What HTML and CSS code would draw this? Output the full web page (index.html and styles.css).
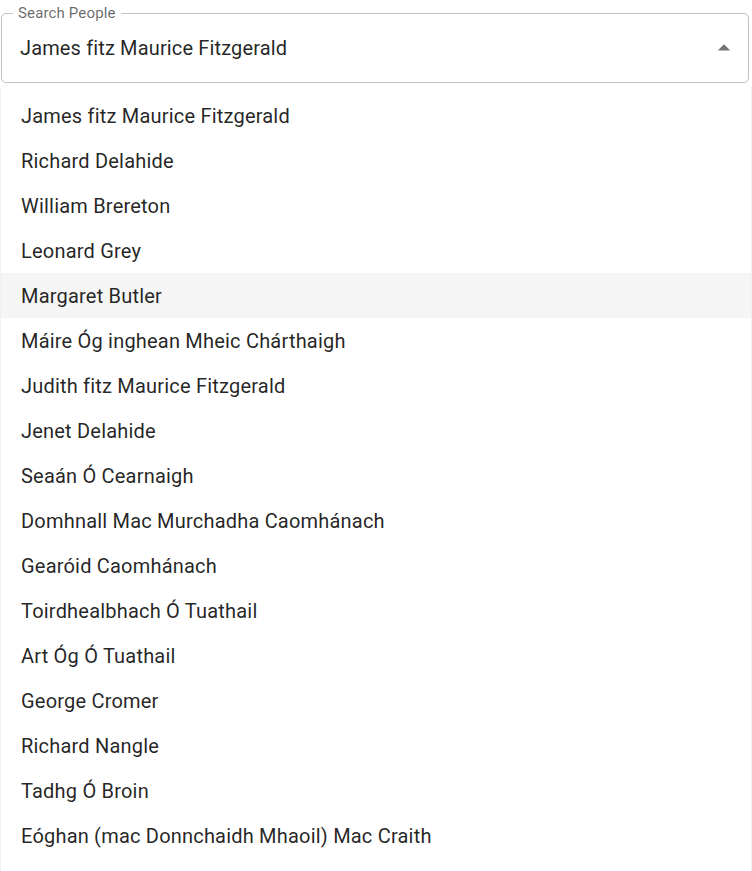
FILE: index.html
```html
<!DOCTYPE html>
<html lang="en">
<head>
<meta charset="utf-8">
<title>Search People</title>
<link rel="stylesheet" href="styles.css">
</head>
<body>
<div class="autocomplete">
  <div class="field">
    <label class="field-label">Search People</label>
    <input class="field-input" type="text" value="James fitz Maurice Fitzgerald" readonly>
    <span class="field-toggle">
      <svg viewBox="0 0 24 24" width="30" height="30" aria-hidden="true"><path d="M7 14l5-5 5 5z" fill="currentColor"/></svg>
    </span>
  </div>
  <div class="paper">
    <ul class="listbox">
      <li class="option">James fitz Maurice Fitzgerald</li>
      <li class="option">Richard Delahide</li>
      <li class="option">William Brereton</li>
      <li class="option">Leonard Grey</li>
      <li class="option option-focused">Margaret Butler</li>
      <li class="option">Máire Óg inghean Mheic Chárthaigh</li>
      <li class="option">Judith fitz Maurice Fitzgerald</li>
      <li class="option">Jenet Delahide</li>
      <li class="option">Seaán Ó Cearnaigh</li>
      <li class="option">Domhnall Mac Murchadha Caomhánach</li>
      <li class="option">Gearóid Caomhánach</li>
      <li class="option">Toirdhealbhach Ó Tuathail</li>
      <li class="option">Art Óg Ó Tuathail</li>
      <li class="option">George Cromer</li>
      <li class="option">Richard Nangle</li>
      <li class="option">Tadhg Ó Broin</li>
      <li class="option">Eóghan (mac Donnchaidh Mhaoil) Mac Craith</li>
    </ul>
  </div>
</div>
</body>
</html>
```
FILE: styles.css
```css
html, body {
  margin: 0;
  padding: 0;
  background: #fff;
  overflow: hidden;
  height: 100%;
}

body {
  font-family: Roboto, "Noto Sans", "Liberation Sans", sans-serif;
  color: rgba(0, 0, 0, 0.87);
}

.autocomplete {
  padding: 13px 0 0 0;
}

.field {
  position: relative;
  margin: 0 3px 0 1px;
  height: 70px;
  box-sizing: border-box;
  border: 1px solid rgba(0, 0, 0, 0.23);
  border-radius: 5px;
  display: flex;
  align-items: center;
  padding: 0 9px 0 18px;
}

.field-label {
  position: absolute;
  top: -11px;
  left: 11px;
  padding: 0 5px;
  background: #fff;
  font-size: 15px;
  line-height: 20px;
  color: rgba(0, 0, 0, 0.6);
  letter-spacing: 0.01em;
}

.field-input {
  flex: 1;
  min-width: 0;
  border: 0;
  outline: 0;
  padding: 0;
  margin: 0;
  background: transparent;
  font: inherit;
  font-size: 20px;
  line-height: 28px;
  color: rgba(0, 0, 0, 0.87);
  letter-spacing: 0.007em;
}

.field-toggle {
  display: flex;
  width: 30px;
  height: 30px;
  color: rgba(0, 0, 0, 0.54);
}

.paper {
  margin: 2px 1px 0 1px;
  background: #fff;
  border-radius: 5px;
  box-shadow: 0 2px 1px -1px rgba(0,0,0,0.2), 0 1px 1px 0 rgba(0,0,0,0.14), 0 1px 3px 0 rgba(0,0,0,0.12);
}

.listbox {
  list-style: none;
  margin: 0;
  padding: 8px 0 30px;
}

.option {
  height: 45px;
  box-sizing: border-box;
  padding: 0 20px;
  display: flex;
  align-items: center;
  font-size: 20px;
  line-height: 30px;
  letter-spacing: 0.01em;
  color: rgba(0, 0, 0, 0.87);
}

.option-focused {
  background: rgba(0, 0, 0, 0.04);
}
```
